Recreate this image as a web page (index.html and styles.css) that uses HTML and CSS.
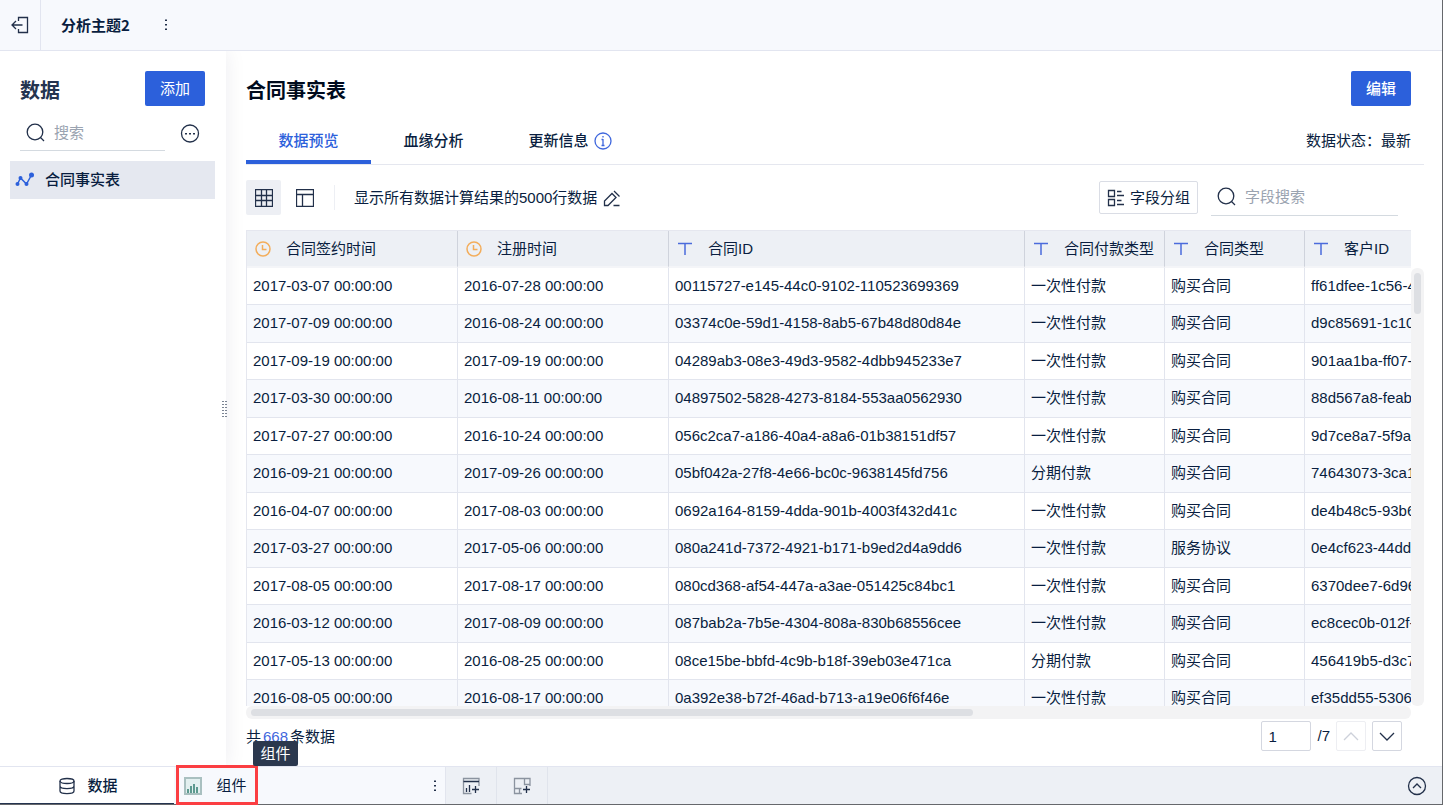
FILE: index.html
```html
<!DOCTYPE html>
<html lang="zh-CN">
<head>
    <meta charset="UTF-8">
    <meta name="viewport" content="width=device-width, initial-scale=1.0">
    <title>分析主题2</title>
    <link rel="stylesheet" href="styles.css">
</head>
<body>
    <div class="app">
        <header class="topbar">
            <button class="icon-btn exit-btn" aria-label="退出">
                <svg width="18" height="18" viewBox="0 0 18 18"><path d="M7.500 5V1.500H16.500V16.500H7.500V13M1.500 9H11.500M5 5L1 9L5 13"/></svg>
            </button>
            <h1 class="subject">分析主题2</h1>
            <button class="icon-btn more-btn" aria-label="更多">
                <svg width="4" height="14" viewBox="0 0 4 14"><path class="solid" d="M1 1.500h2v1.500H1zM1 6h2v1.500H1zM1 10.500h2v1.500H1z"/></svg>
            </button>
        </header>

        <div class="workspace">
            <aside class="sidebar">
                <div class="side-head">
                    <h2>数据</h2>
                    <button class="primary-btn">添加</button>
                </div>
                <div class="side-search">
                    <label class="search-box">
                        <svg width="20" height="20" viewBox="0 0 20 20"><circle cx="9" cy="9" r="7.800"/><path d="M14.500 14.500L18 18"/></svg>
                        <input type="text" placeholder="搜索" aria-label="搜索">
                    </label>
                    <button class="icon-btn" aria-label="更多操作">
                        <svg width="20" height="20" viewBox="0 0 20 20"><circle cx="10" cy="10.500" r="8.500"/><path class="solid" d="M5 10h2v1.500H5zM9 10h2v1.500H9zM13 10h2v1.500H13z"/></svg>
                    </button>
                </div>
                <a class="table-item" href="#">
                    <svg width="20" height="16" viewBox="0 0 20 16"><path d="M2.500 12L5.500 6L11.500 12L16.500 3"/><circle cx="2.500" cy="12" r="2"/><circle cx="5.500" cy="6" r="2"/><circle cx="11.500" cy="12" r="2"/><circle cx="16.500" cy="3" r="2.500"/></svg>
                    <span>合同事实表</span>
                </a>
                <span class="drag-handle">
                    <svg width="6" height="16" viewBox="0 0 6 16"><path class="solid" d="M0 0h2v1H0zM0 3h2v1H0zM0 6h2v1H0zM0 9h2v1H0zM0 12h2v1H0zM0 15h2v1H0zM3 0h2v1H3zM3 3h2v1H3zM3 6h2v1H3zM3 9h2v1H3zM3 12h2v1H3zM3 15h2v1H3z"/></svg>
                </span>
            </aside>

            <main class="main">
                <div class="main-head">
                    <h2>合同事实表</h2>
                    <button class="primary-btn bold">编辑</button>
                </div>

                <div class="tabs">
                    <button class="tab active">数据预览</button>
                    <button class="tab">血缘分析</button>
                    <button class="tab">更新信息
                        <svg class="info" width="18" height="18" viewBox="0 0 18 18"><circle cx="9" cy="9" r="8"/><path d="M9 7V13.500M9 4V5.500M7.500 7.500H9M7.500 13.500H10.500"/></svg>
                    </button>
                    <span class="status">数据状态：最新</span>
                </div>

                <div class="toolbar">
                    <button class="view-btn active" aria-label="表格">
                        <svg width="18" height="18" viewBox="0 0 18 18"><path d="M.5.5H17.500V17.500H.5zM6.500.5V17.500M11.500.5V17.500M.5 6.500H17.500M.5 11.500H17.500"/></svg>
                    </button>
                    <button class="view-btn" aria-label="结构">
                        <svg width="18" height="18" viewBox="0 0 18 18"><path d="M.5.5H17.500V17.500H.5zM.5 5.500H17.500M6.500 5.500V17.500"/></svg>
                    </button>
                    <span class="divider"></span>
                    <span class="row-info">显示所有数据计算结果的5000行数据</span>
                    <button class="icon-btn" aria-label="编辑行数">
                        <svg width="18" height="18" viewBox="0 0 18 18"><path d="M1.500 16.500V12L9 4.500L13 8.500L5 16.500zM11 2L16.500 7.500M10.500 16.500H16.500"/></svg>
                    </button>
                    <button class="group-btn">
                        <svg width="18" height="18" viewBox="0 0 18 18"><path d="M1.500 1.500H7.500V7.500H1.500zM1.500 10.500H7.500V16.500H1.500zM10 2.500H14.500M10 6.500H17M10 11.500H14.500M10 15.500H17"/></svg>
                        字段分组
                    </button>
                    <label class="search-box field-search">
                        <svg width="20" height="20" viewBox="0 0 20 20"><circle cx="9" cy="9" r="7.800"/><path d="M14.500 14.500L18 18"/></svg>
                        <input type="text" placeholder="字段搜索" aria-label="字段搜索">
                    </label>
                </div>

                <div class="grid-area">
                    <div class="grid-view">
                        <table>
                            <colgroup>
                                <col class="col-date">
                                <col class="col-date">
                                <col class="col-id">
                                <col class="col-type">
                                <col class="col-type">
                                <col class="col-id">
                            </colgroup>
                            <thead>
                                <tr>
                                    <th><div><svg class="clock" width="16" height="16" viewBox="0 0 16 16"><circle cx="8" cy="8" r="7"/><path d="M7.500 4V8.500H11.500"/></svg>合同签约时间</div></th>
                                    <th><div><svg class="clock" width="16" height="16" viewBox="0 0 16 16"><circle cx="8" cy="8" r="7"/><path d="M7.500 4V8.500H11.500"/></svg>注册时间</div></th>
                                    <th><div><svg class="text-type" width="16" height="16" viewBox="0 0 16 16"><path d="M1 2.500H15M8 2.500V14"/></svg>合同ID</div></th>
                                    <th><div><svg class="text-type" width="16" height="16" viewBox="0 0 16 16"><path d="M1 2.500H15M8 2.500V14"/></svg>合同付款类型</div></th>
                                    <th><div><svg class="text-type" width="16" height="16" viewBox="0 0 16 16"><path d="M1 2.500H15M8 2.500V14"/></svg>合同类型</div></th>
                                    <th><div><svg class="text-type" width="16" height="16" viewBox="0 0 16 16"><path d="M1 2.500H15M8 2.500V14"/></svg>客户ID</div></th>
                                </tr>
                            </thead>
                            <tbody>
                                <tr><td>2017-03-07 00:00:00</td><td>2016-07-28 00:00:00</td><td>00115727-e145-44c0-9102-110523699369</td><td>一次性付款</td><td>购买合同</td><td>ff61dfee-1c56-4</td></tr>
                                <tr><td>2017-07-09 00:00:00</td><td>2016-08-24 00:00:00</td><td>03374c0e-59d1-4158-8ab5-67b48d80d84e</td><td>一次性付款</td><td>购买合同</td><td>d9c85691-1c10</td></tr>
                                <tr><td>2017-09-19 00:00:00</td><td>2017-09-19 00:00:00</td><td>04289ab3-08e3-49d3-9582-4dbb945233e7</td><td>一次性付款</td><td>购买合同</td><td>901aa1ba-ff07-</td></tr>
                                <tr><td>2017-03-30 00:00:00</td><td>2016-08-11 00:00:00</td><td>04897502-5828-4273-8184-553aa0562930</td><td>一次性付款</td><td>购买合同</td><td>88d567a8-feab</td></tr>
                                <tr><td>2017-07-27 00:00:00</td><td>2016-10-24 00:00:00</td><td>056c2ca7-a186-40a4-a8a6-01b38151df57</td><td>一次性付款</td><td>购买合同</td><td>9d7ce8a7-5f9a</td></tr>
                                <tr><td>2016-09-21 00:00:00</td><td>2017-09-26 00:00:00</td><td>05bf042a-27f8-4e66-bc0c-9638145fd756</td><td>分期付款</td><td>购买合同</td><td>74643073-3ca1</td></tr>
                                <tr><td>2016-04-07 00:00:00</td><td>2017-08-03 00:00:00</td><td>0692a164-8159-4dda-901b-4003f432d41c</td><td>一次性付款</td><td>购买合同</td><td>de4b48c5-93b6</td></tr>
                                <tr><td>2017-03-27 00:00:00</td><td>2017-05-06 00:00:00</td><td>080a241d-7372-4921-b171-b9ed2d4a9dd6</td><td>一次性付款</td><td>服务协议</td><td>0e4cf623-44dd</td></tr>
                                <tr><td>2017-08-05 00:00:00</td><td>2017-08-17 00:00:00</td><td>080cd368-af54-447a-a3ae-051425c84bc1</td><td>一次性付款</td><td>购买合同</td><td>6370dee7-6d96</td></tr>
                                <tr><td>2016-03-12 00:00:00</td><td>2017-08-09 00:00:00</td><td>087bab2a-7b5e-4304-808a-830b68556cee</td><td>一次性付款</td><td>购买合同</td><td>ec8cec0b-012f-</td></tr>
                                <tr><td>2017-05-13 00:00:00</td><td>2016-08-25 00:00:00</td><td>08ce15be-bbfd-4c9b-b18f-39eb03e471ca</td><td>分期付款</td><td>购买合同</td><td>456419b5-d3c7</td></tr>
                                <tr><td>2016-08-05 00:00:00</td><td>2016-08-17 00:00:00</td><td>0a392e38-b72f-46ad-b713-a19e06f6f46e</td><td>一次性付款</td><td>购买合同</td><td>ef35dd55-5306</td></tr>
                            </tbody>
                        </table>
                    </div>
                    <div class="scroll-y"><span class="thumb"></span></div>
                    <div class="scroll-x"><span class="thumb"></span></div>
                </div>

                <div class="pager">
                    <span class="total">共<em>668</em>条数据</span>
                    <input class="page-input" type="text" value="1" aria-label="页码">
                    <span>/7</span>
                    <button class="page-btn" disabled aria-label="上一页">
                        <svg width="16" height="16" viewBox="0 0 16 16"><path d="M1 12L8 5L15 12"/></svg>
                    </button>
                    <button class="page-btn" aria-label="下一页">
                        <svg width="16" height="16" viewBox="0 0 16 16"><path d="M1 5L8 12L15 5"/></svg>
                    </button>
                </div>
            </main>
        </div>

        <footer class="bottombar">
            <button class="sheet active">
                <svg width="18" height="18" viewBox="0 0 18 18"><ellipse cx="9" cy="4" rx="7" ry="2.500"/><path d="M2 4V14C2 17.500 16 17.500 16 14V4M2 9C2 12.500 16 12.500 16 9"/></svg>
                数据
            </button>
            <div class="sheet-list">
                <button class="sheet marked">
                    <svg class="chart" width="18" height="18" viewBox="0 0 18 18"><path class="frame" d="M1 1H17V17H1z"/><path class="bars" d="M4 12V16M7 9V16M10 7V16M13 10V16"/></svg>
                    组件
                    <span class="tooltip">组件</span>
                </button>
                <button class="icon-btn sheet-more" aria-label="更多">
                    <svg width="4" height="14" viewBox="0 0 4 14"><path class="solid" d="M1 1.500h2v1.500H1zM1 6h2v1.500H1zM1 10.500h2v1.500H1z"/></svg>
                </button>
            </div>
            <button class="add-btn" aria-label="添加组件">
                <svg width="18" height="18" viewBox="0 0 18 18"><path class="soft" d="M9.500 16.500H1.500V1.500H17V9"/><path d="M1.500 4.500H17M4.500 11V15M7.500 8V15M10 12.500H17M13.500 9V16"/></svg>
            </button>
            <button class="add-btn" aria-label="添加仪表板">
                <svg width="18" height="18" viewBox="0 0 18 18"><path class="soft" d="M9 16.500H1.500V1.500H17V9M11.500 1.500V7.500H17M1.500 11.500H8.500M6.500 11.500V16.500"/><path d="M10 12.500H17M13.500 9V16"/></svg>
            </button>
            <button class="icon-btn collapse-btn" aria-label="展开">
                <svg width="20" height="20" viewBox="0 0 20 20"><circle cx="10" cy="10" r="8.500"/><path d="M6 12L10 8L14 12"/></svg>
            </button>
        </footer>
    </div>
</body>
</html>
```
FILE: styles.css
```css
* {
    box-sizing: border-box;
}
body {
    margin: 0;
    font-family: "Liberation Sans", "Noto Sans CJK SC", sans-serif;
    font-size: 15px;
    line-height: 20px;
    color: #091e40;
    background-color: #fff;
}
h1, h2 {
    margin: 0;
}
button, input {
    font: inherit;
    color: inherit;
    padding: 0;
    border: none;
    background: none;
}
button {
    cursor: pointer;
}
svg {
    display: block;
    flex: none;
    fill: none;
    stroke: #22304a;
    stroke-width: 1.3;
}
svg .solid {
    fill: #22304a;
    stroke: none;
}
.app {
    height: 100vh;
    display: flex;
    flex-direction: column;
    border-right: 1px solid #66686c;
    border-bottom: 1px solid #66686c;
}
.icon-btn {
    display: flex;
    align-items: center;
    justify-content: center;
}

/* top bar */
.topbar {
    display: flex;
    align-items: center;
    height: 51px;
    background-color: #f7f9fd;
    border-bottom: 1px solid #e2e5f0;
}
.exit-btn {
    width: 41px;
    height: 50px;
    border-right: 1px solid #e2e5f0;
}
.subject {
    margin-left: 20px;
    font-family: "Noto Sans CJK SC", sans-serif;
    font-size: 15px;
}
.more-btn {
    width: 20px;
    height: 30px;
    margin-left: 26px;
}

.workspace {
    flex: 1;
    min-height: 0;
    display: flex;
}

/* sidebar */
.sidebar {
    position: relative;
    width: 226px;
    flex: none;
    padding: 20px 11px 0 10px;
    box-shadow: 0 0 20px rgba(9, 30, 64, 0.08);
    clip-path: inset(0 -20px 0 0);
}
.side-head {
    display: flex;
    align-items: center;
    justify-content: space-between;
    padding: 0 10px;
    margin-bottom: 9px;
}
.side-head h2, .main-head h2 {
    padding-top: 4px;
    font-size: 20px;
}
.side-head h2 {
    color: #24344f;
}
.primary-btn {
    width: 60px;
    height: 35px;
    border-radius: 2px;
    color: #fff;
    background-color: #2c60db;
}
.primary-btn.bold {
    font-weight: 500;
}
.side-search {
    display: flex;
    justify-content: space-between;
    padding: 0 15px 0 10px;
    margin-bottom: 10px;
}
.search-box {
    display: flex;
    align-items: center;
    gap: 8px;
    width: 145px;
    height: 36px;
    padding-left: 6px;
    border-bottom: 1px solid #d4dae0;
}
.search-box input {
    flex: 1;
    min-width: 0;
    outline: none;
}
.search-box input::placeholder {
    color: #9aa3b0;
}
.table-item {
    display: flex;
    align-items: center;
    gap: 10px;
    height: 38px;
    padding-left: 5px;
    font-weight: 500;
    color: inherit;
    text-decoration: none;
    background-color: #e5e8f0;
}
.table-item svg {
    stroke: #2c60db;
    stroke-width: 1.5;
}
.table-item circle {
    fill: #2c60db;
    stroke: none;
}
.drag-handle {
    position: absolute;
    right: -2px;
    top: 50%;
    transform: translateY(-50%);
}
.drag-handle .solid {
    fill: #7b8493;
}

/* main */
.main {
    flex: 1;
    min-width: 0;
    display: flex;
    flex-direction: column;
    padding: 20px 18px 0 20px;
}
.main-head {
    display: flex;
    align-items: center;
    justify-content: space-between;
    padding-right: 13px;
}
.main-head h2 {
    color: #000b1d;
}
.tabs {
    display: flex;
    height: 59px;
    border-bottom: 1px solid #e5e7ef;
}
.tab {
    display: flex;
    align-items: center;
    justify-content: center;
    width: 125px;
    padding-top: 15px;
    font-weight: 500;
    white-space: nowrap;
    border-bottom: 4px solid transparent;
}
.tab.active {
    color: #2c60db;
    border-bottom-color: #2c60db;
}
.tab:nth-child(3) {
    width: 148px;
}
.info {
    margin-left: 5px;
    stroke: #3f67dd;
}
.status {
    margin: 25px 13px 0 auto;
}
.toolbar {
    display: flex;
    align-items: center;
    margin: 15px 0;
    padding-right: 26px;
    height: 35px;
}
.view-btn {
    display: flex;
    align-items: center;
    justify-content: center;
    width: 35px;
    height: 35px;
    margin-right: 6px;
    border-radius: 2px;
}
.view-btn.active {
    background-color: #edeff4;
}
.divider {
    width: 1px;
    height: 25px;
    margin: 0 19px 0 6px;
    background-color: #edeff4;
}
.row-info {
    margin-right: 6px;
}
.group-btn {
    display: flex;
    align-items: center;
    justify-content: center;
    gap: 5px;
    width: 99px;
    height: 33px;
    margin: 0 13px 0 auto;
    border: 1px solid #dadde5;
    border-radius: 2px;
}
.field-search {
    width: 187px;
}

/* data grid */
.grid-area {
    flex: 1;
    min-height: 0;
    display: grid;
    grid-template-columns: 1fr 13px;
    grid-template-rows: 1fr 13px;
}
.grid-view {
    min-width: 0;
    overflow: hidden;
    border-left: 1px solid #e5e7ef;
    border-top: 1px solid #e5e7ef;
}
table {
    width: 1414px;
    table-layout: fixed;
    border-collapse: separate;
    border-spacing: 0;
}
.col-date {
    width: 211px;
}
.col-id {
    width: 356px;
}
.col-type {
    width: 140px;
}
th {
    height: 37px;
    padding: 0 0 0 8px;
    font-weight: 400;
    background: #edf0f5 padding-box;
    border-right: 1px solid #cfd3dc;
    border-bottom: 2px solid #f4f5f8;
}
th div {
    display: flex;
    align-items: center;
    gap: 15px;
    white-space: nowrap;
}
td {
    height: 37px;
    padding: 0 6px;
    white-space: nowrap;
    border-right: 1px solid #e2e5ee;
    border-bottom: 1px solid #e2e5ee;
}
tbody tr:nth-child(even) td {
    height: 38px;
    padding-bottom: 2px;
    background-color: #f7f9fd;
}
.clock {
    stroke: #f3ad5b;
    stroke-width: 1.5;
}
.text-type {
    stroke: #4b6bdc;
    stroke-width: 1.5;
}
.scroll-y {
    margin-top: 38px;
    padding: 5px 3px;
    border-radius: 6px;
    background-color: #f3f3f4;
}
.scroll-x {
    padding: 3px 5px;
    border-radius: 6px;
    background-color: #f3f3f4;
}
.thumb {
    display: block;
    border-radius: 4px;
    background-color: #dddfe3;
}
.scroll-y .thumb {
    height: 41px;
}
.scroll-x .thumb {
    width: 62.5%;
    height: 7px;
}

/* pager */
.pager {
    display: flex;
    align-items: center;
    gap: 6px;
    padding: 2px 22px 15px 0;
}
.total {
    margin-right: auto;
    padding-top: 2px;
}
.total em {
    margin: 0 2px;
    font-style: normal;
    color: #3f67dd;
}
.page-input {
    width: 50px;
    height: 30px;
    padding-left: 6px;
    border: 1px solid #d4d7e0;
    border-radius: 2px;
}
.page-btn {
    display: flex;
    align-items: center;
    justify-content: center;
    width: 30px;
    height: 30px;
    border: 1px solid #d4d7e0;
    border-radius: 2px;
}
.page-btn:disabled {
    border-color: #edeef2;
}
.page-btn:disabled svg {
    stroke: #cdd1da;
}

/* bottom bar */
.bottombar {
    display: flex;
    height: 38px;
    border-top: 1px solid #e2e5f0;
    background-color: #edf0f5;
}
.sheet {
    display: flex;
    align-items: center;
    justify-content: center;
    gap: 11px;
    padding-top: 1px;
}
.sheet.active {
    width: 174px;
    padding-left: 2px;
    font-weight: 500;
    background-color: #fff;
    border-bottom: 1px solid #24344f;
}
.sheet-list {
    display: flex;
    justify-content: space-between;
    width: 272px;
    padding-left: 2px;
    background-color: #f7f9fd;
    border-right: 1px solid #e2e5ee;
}
.marked {
    position: relative;
    width: 82px;
    height: 40px;
    margin-top: -2px;
    padding-right: 3px;
    gap: 14px;
    border: 3px solid #fb3e42;
}
.chart .frame {
    fill: #e3f0f0;
    stroke: #a9c0c0;
    stroke-width: 2;
}
.chart .bars {
    stroke: #5d9a90;
    stroke-width: 2;
}
.tooltip {
    position: absolute;
    left: 74px;
    bottom: 36px;
    width: 45px;
    height: 25px;
    line-height: 25px;
    border-radius: 2px;
    color: #fff;
    background-color: #2b384e;
}
.sheet-more {
    width: 20px;
}
.add-btn {
    display: flex;
    align-items: center;
    justify-content: center;
    width: 51px;
    border-right: 1px solid #e0e4ec;
}
.add-btn .soft {
    stroke: #8b939f;
}
.collapse-btn {
    width: 20px;
    margin: 0 15px 0 auto;
}
```
